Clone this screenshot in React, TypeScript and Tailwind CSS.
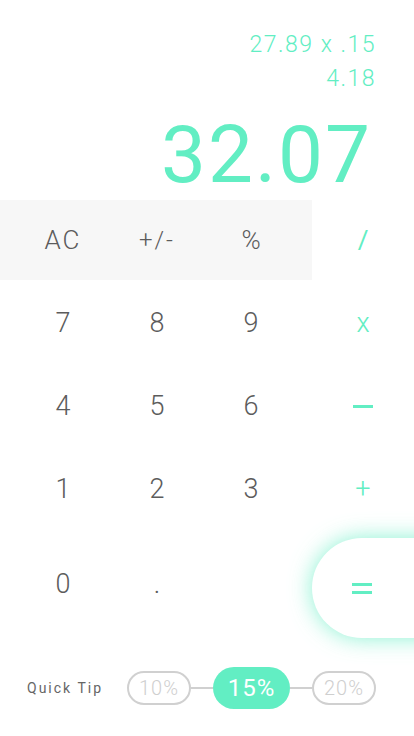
import React from "react";

const font = { fontFamily: "Roboto, 'Noto Sans', sans-serif" };

function Key({ label, green = false }: { label: string; green?: boolean }) {
  return (
    <div
      className={`flex items-center justify-center text-[27px] font-light ${
        green ? "text-[#62eec3]" : "text-[#5c5c5c]"
      }`}
    >
      {label}
    </div>
  );
}

export default function App() {
  return (
    <div className="w-[414px] h-[736px] bg-white overflow-hidden flex flex-col" style={font}>
      {/* Display */}
      <div className="flex flex-col items-end pr-[38px] pt-[29px] text-[#62eec3]">
        <div className="text-[23px] leading-[32px] tracking-[1.5px] font-light">27.89 x .15</div>
        <div className="text-[23px] leading-[32px] tracking-[1.5px] mt-[2px] font-light">4.18</div>
      </div>
      <div className="flex justify-end pr-[42px] mt-[5px] pt-[10px] h-[100px] items-center">
        <div className="text-[80px] text-[#62eec3] tracking-[2px] leading-none">32.07</div>
      </div>

      {/* Top row */}
      <div className="flex h-[80px]">
        <div className="w-[312px] shrink-0 bg-[#f7f7f7] grid grid-cols-[16px_94px_94px_94px_1fr]">
          <div />
          <div className="flex items-center justify-center text-[26px] text-[#5c5c5c] tracking-[2px] font-light">AC</div>
          <div className="flex items-center justify-center text-[24px] text-[#5c5c5c] tracking-[2px] font-light">+/-</div>
          <div className="flex items-center justify-center text-[26px] text-[#5c5c5c] font-light">%</div>
          <div />
        </div>
        <div className="w-[102px] shrink-0 flex items-center justify-center text-[26px] text-[#62eec3]">/</div>
      </div>

      {/* Number rows */}
      <div className="mt-[2px] grid grid-cols-[16px_94px_94px_94px_14px_102px] grid-rows-[83px_83px_83px]">
        <div /><Key label="7" /><Key label="8" /><Key label="9" /><div /><Key label="x" green />
        <div /><Key label="4" /><Key label="5" /><Key label="6" /><div />
        <div className="flex items-center justify-center">
          <div className="w-[20px] h-[3px] bg-[#62eec3]" />
        </div>
        <div /><Key label="1" /><Key label="2" /><Key label="3" /><div /><Key label="+" green />
      </div>

      {/* Last row */}
      <div className="flex h-[100px] mt-[7px] items-center">
        <div className="grid grid-cols-[16px_94px_94px] w-[312px] shrink-0 h-full pb-[7px]">
          <div /><Key label="0" /><Key label="." />
        </div>
        <div className="w-[102px] shrink-0 h-full">
          <div className="w-[130px] h-full bg-white rounded-l-full shadow-[0_0_22px_rgba(98,238,195,0.75)] flex items-center pl-[40px]">
            <div className="flex flex-col gap-[5px]">
              <div className="w-[20px] h-[3px] bg-[#62eec3]" />
              <div className="w-[20px] h-[3px] bg-[#62eec3]" />
            </div>
          </div>
        </div>
      </div>

      {/* Quick tip */}
      <div className="flex items-center mt-[29px] pl-[27px]">
        <div className="text-[14px] text-[#666] tracking-[2px] w-[100px]">Quick Tip</div>
        <div className="flex items-center">
          <div className="w-[64px] h-[34px] rounded-full border-2 border-[#d0d0d0] flex items-center justify-center text-[20px] text-[#cfcfcf] font-light tracking-[1px]">10%</div>
          <div className="w-[22px] h-[2px] bg-[#d0d0d0]" />
          <div className="w-[77px] h-[42px] rounded-full bg-[#62eec3] flex items-center justify-center text-[24px] text-white tracking-[1px]">15%</div>
          <div className="w-[22px] h-[2px] bg-[#d0d0d0]" />
          <div className="w-[64px] h-[34px] rounded-full border-2 border-[#d0d0d0] flex items-center justify-center text-[20px] text-[#cfcfcf] font-light tracking-[1px]">20%</div>
        </div>
      </div>
    </div>
  );
}
